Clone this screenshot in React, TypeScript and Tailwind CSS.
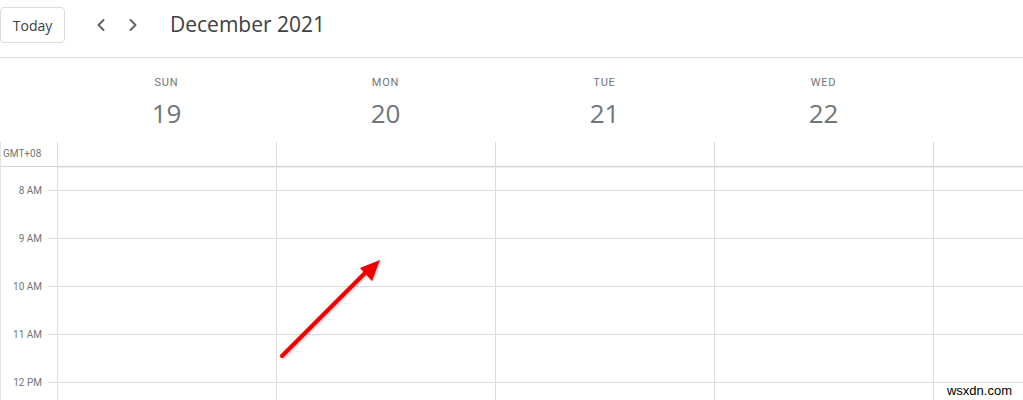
import React from "react";
import { ChevronLeft, ChevronRight } from "lucide-react";

const days = [
  { d: "SUN", n: "19" },
  { d: "MON", n: "20" },
  { d: "TUE", n: "21" },
  { d: "WED", n: "22" },
];
const hours = ["8 AM", "9 AM", "10 AM", "11 AM", "12 PM"];

function DayColumn({ last }: { last?: boolean }) {
  return (
    <div className={last ? "flex-1 border-l border-[#dadce0] flex flex-col" : "w-[219px] shrink-0 border-l border-[#dadce0] flex flex-col"}>
      <div className="h-[25px] shrink-0 border-b border-[#d0d2d6] shadow-[0_1px_1px_rgba(0,0,0,0.06)]" />
      <div className="h-[23px] shrink-0" />
      {hours.map((h) => (
        <div key={h} className="h-[48px] shrink-0 border-t border-[#dadce0]" />
      ))}
    </div>
  );
}

export default function App() {
  return (
    <div className="relative w-[1023px] h-[400px] overflow-hidden bg-white" style={{ fontFamily: "Roboto, 'Liberation Sans', sans-serif" }}>
      {/* Top bar */}
      <div className="h-[58px] border-b border-[#dadce0] flex items-start">
        <button className="mt-[7px] w-[65px] h-[36px] border border-[#dadce0] rounded-[4px] text-[14px] font-medium text-[#3c4043] flex items-center justify-center" style={{ fontFamily: "'Open Sans', Roboto, sans-serif" }}>
          Today
        </button>
        <div className="ml-[26px] mt-[15px] flex items-center gap-[12px] text-[#5f6368]">
          <ChevronLeft size={20} strokeWidth={2.4} />
          <ChevronRight size={20} strokeWidth={2.4} />
        </div>
        <div className="ml-[27px] mt-[9px] text-[21px] leading-[30px] text-[#3c4043]" style={{ fontFamily: "'Open Sans', Roboto, sans-serif" }}>
          December 2021
        </div>
      </div>

      {/* Day headers */}
      <div className="h-[84px] flex">
        <div className="w-[57px] shrink-0" />
        {days.map((x) => (
          <div key={x.d} className="w-[219px] shrink-0 flex flex-col items-center pt-[18px]">
            <div className="text-[11px] font-normal tracking-[0.8px] text-[#70757a] leading-[14px]">{x.d}</div>
            <div className="mt-[7px] text-[26px] leading-[32px] text-[#70757a]" style={{ fontFamily: "'Open Sans', Roboto, sans-serif" }}>{x.n}</div>
          </div>
        ))}
        <div className="flex-1" />
      </div>

      {/* Grid */}
      <div className="flex">
        <div className="w-[57px] shrink-0 border-l border-[#e3e4e6] flex flex-col">
          <div className="h-[25px] shrink-0 border-b border-[#d0d2d6] text-[10px] text-[#70757a] pl-[2px] pb-[2px] flex items-center">
            GMT+08
          </div>
          {hours.map((h) => (
            <div key={h} className="h-[48px] shrink-0 flex items-start pt-[17px]">
              <div className="w-[41px] text-right text-[10px] leading-[13px] text-[#70757a]">{h}</div>
              <div className="ml-auto mt-[6px] w-[9px] h-px bg-[#dadce0]" />
            </div>
          ))}
        </div>
        <DayColumn />
        <DayColumn />
        <DayColumn />
        <DayColumn />
        <DayColumn last />
      </div>

      {/* Red arrow annotation */}
      <svg className="absolute left-0 top-0 pointer-events-none" width="1023" height="400">
        <defs>
          <filter id="sh" x="-20%" y="-20%" width="140%" height="140%">
            <feDropShadow dx="1" dy="1" stdDeviation="1" floodColor="#000" floodOpacity="0.25" />
          </filter>
        </defs>
        <g filter="url(#sh)">
          <line x1="282" y1="356" x2="366" y2="272" stroke="#ee0000" strokeWidth="4" strokeLinecap="round" />
          <polygon points="380,260 372,281 360,268" fill="#ee0000" />
        </g>
      </svg>

      {/* Watermark */}
      <div className="absolute right-[10px] bottom-[2px] bg-white px-[1px] text-[13px] leading-[14px] text-black" style={{ fontFamily: "'Liberation Sans', Arial, sans-serif" }}>
        wsxdn.com
      </div>
    </div>
  );
}
